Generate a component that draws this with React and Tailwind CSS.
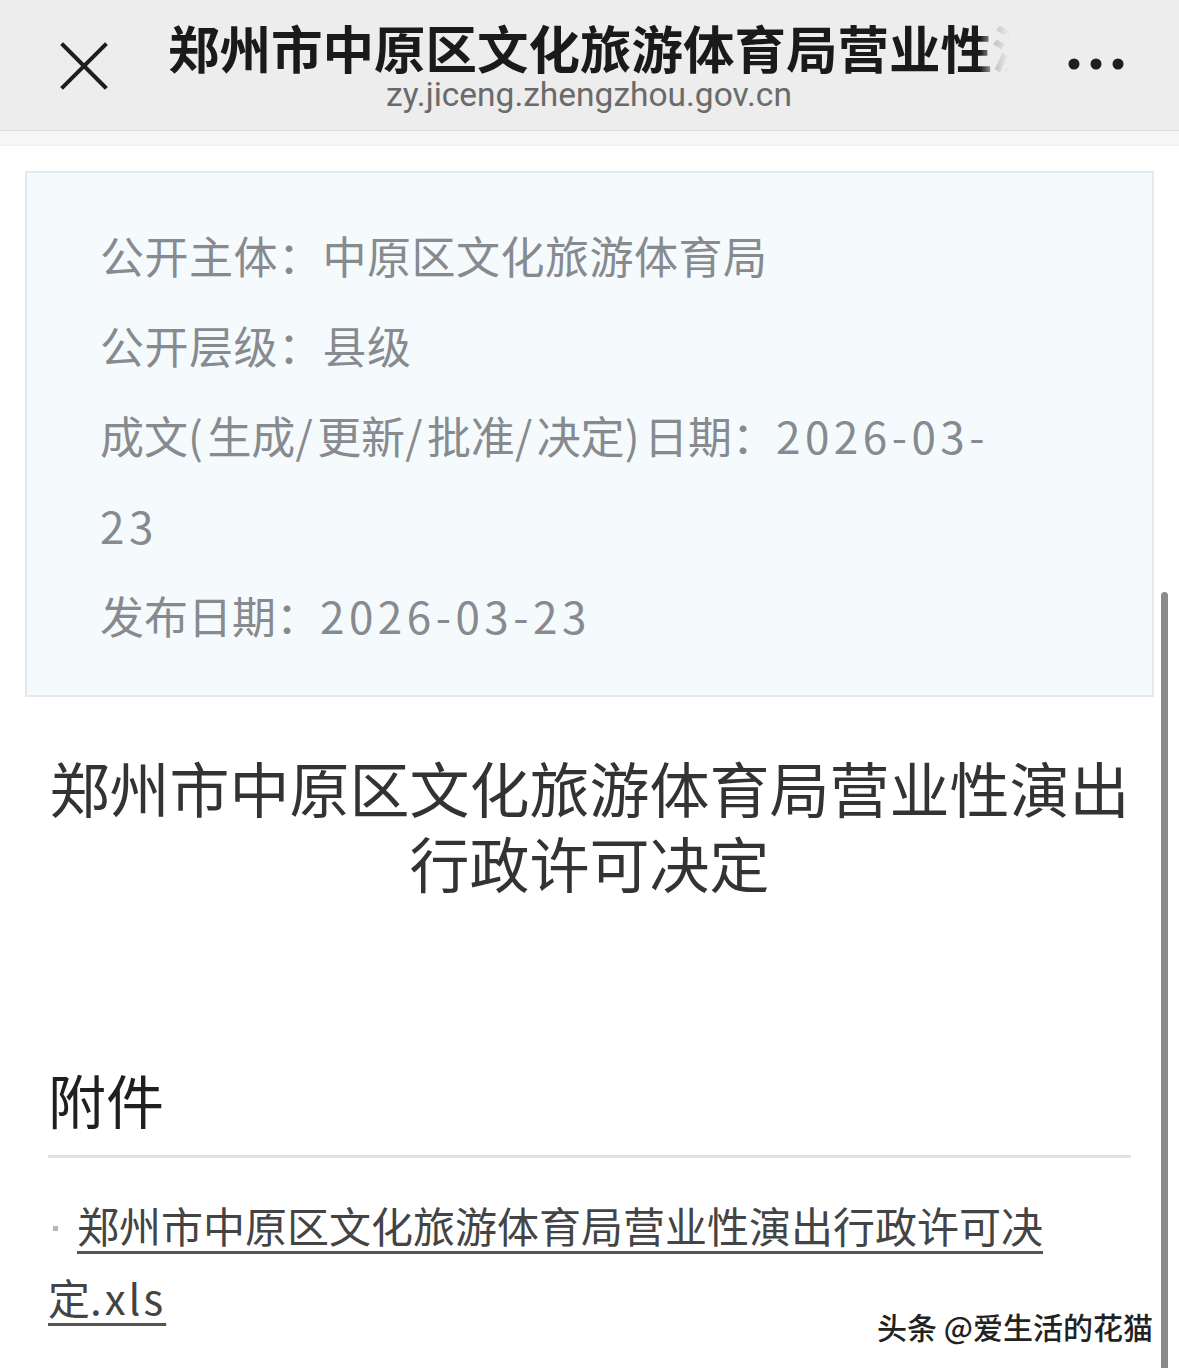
import React from "react";

const cjk = { fontFamily: '"Noto Sans CJK SC", "Noto Sans", sans-serif' };
const latin = { fontFamily: 'Roboto, "Noto Sans CJK SC", sans-serif' };

function CloseIcon() {
  return (
    <svg width="48" height="48" viewBox="0 0 48 48" fill="none">
      <path d="M3 3 L45 45 M45 3 L3 45" stroke="#1e1e1e" strokeWidth="4" strokeLinecap="square" />
    </svg>
  );
}

function Dots() {
  return (
    <svg width="60" height="14" viewBox="0 0 60 14">
      <circle cx="8" cy="7" r="5.5" fill="#1e1e1e" />
      <circle cx="30" cy="7" r="5.5" fill="#1e1e1e" />
      <circle cx="52" cy="7" r="5.5" fill="#1e1e1e" />
    </svg>
  );
}

// Widen ASCII runs slightly, as the reference's Latin glyphs are wider
function Wide({ text }) {
  const parts = text.split(/([\x20-\x7e]+)/).filter((p) => p.length);
  return (
    <>
      {parts.map((p, i) =>
        /^[\x20-\x7e]+$/.test(p) ? (
          <span key={i} className="tracking-[4.5px]">
            {p}
          </span>
        ) : (
          <span key={i}>{p}</span>
        )
      )}
    </>
  );
}

export default function App() {
  return (
    <div className="relative w-[1179px] h-[1368px] overflow-hidden bg-white" style={cjk}>
      {/* Header */}
      <div className="h-[131px] bg-[#ededed] border-b border-[#dcdcdc] flex items-start">
        <div className="w-[168px] h-full flex items-center justify-center pt-[2px]">
          <CloseIcon />
        </div>
        <div className="w-[842px] flex flex-col items-center pt-[20px]">
          <div className="relative w-full overflow-hidden whitespace-nowrap">
            <div className="text-[51.5px] leading-[54px] font-bold text-[#1a1a1a]">
              郑州市中原区文化旅游体育局营业性演出行政许可决定
            </div>
            <div className="absolute right-0 top-0 h-full w-[30px] bg-gradient-to-r from-[#ededed00] via-[#edededd0] to-[#ededed]" />
          </div>
          <div className="text-[33.5px] leading-[36px] text-[#6a6a6a] mt-[3px]" style={latin}>
            zy.jiceng.zhengzhou.gov.cn
          </div>
        </div>
        <div className="flex-1 h-full flex items-center justify-center pl-[2px] pb-[2px]">
          <Dots />
        </div>
      </div>
      <div className="h-[15px] bg-[#f6f6f6] border-b border-[#f0f0f0]" />

      {/* Body */}
      <div className="px-[25px] pt-[25px]">
        <div className="h-[526px] bg-[#f5fafd] border-2 border-[#e2e9ef] pl-[73px] pt-[37px] text-[44px] leading-[90px] text-[#878a8e]">
          <div className="tracking-[0.5px]">公开主体：中原区文化旅游体育局</div>
          <div className="tracking-[0.5px]">公开层级：县级</div>
          <div>
            <Wide text="成文(生成/更新/批准/决定)日期：2026-03-" />
            <br />
            <Wide text="23" />
          </div>
          <div>
            <Wide text="发布日期：2026-03-23" />
          </div>
        </div>

        <div className="mt-[52px] text-center text-[60px] leading-[75px] text-[#333333] whitespace-nowrap">
          郑州市中原区文化旅游体育局营业性演出
          <br />
          行政许可决定
        </div>

        <div className="mt-[165px] px-[23px]">
          <div className="text-[58px] leading-[70px] text-[#1f1f1f]">附件</div>
          <div className="mt-[21px] h-[3px] bg-[#e2e2e2]" />
          <div className="mt-[31px] text-[42px] leading-[72px] text-[#444444] whitespace-nowrap">
            <span className="inline-block align-middle w-[5px] h-[5px] bg-[#b8b8b8] ml-[5px] mr-[19px] mb-[6px]" />
            <span className="underline decoration-[3px] underline-offset-[8px] decoration-[#555555]">
              郑州市中原区文化旅游体育局营业性演出行政许可决
              <br />
              定<span className="tracking-[3px]">.xls</span>
            </span>
          </div>
        </div>
      </div>

      {/* Scrollbar */}
      <div className="absolute left-[1161px] top-[592px] w-[7px] h-[800px] rounded-full bg-[#8a8a8a]" />

      {/* Watermark */}
      <div
        className="absolute right-[26px] top-[1305px] text-[30px] leading-[42px] text-[#222222] font-medium whitespace-nowrap"
        style={{ textShadow: "0 0 2px #fff, 0 0 2px #fff, 0 0 3px #fff" }}
      >
        头条 @爱生活的花猫
      </div>
    </div>
  );
}
